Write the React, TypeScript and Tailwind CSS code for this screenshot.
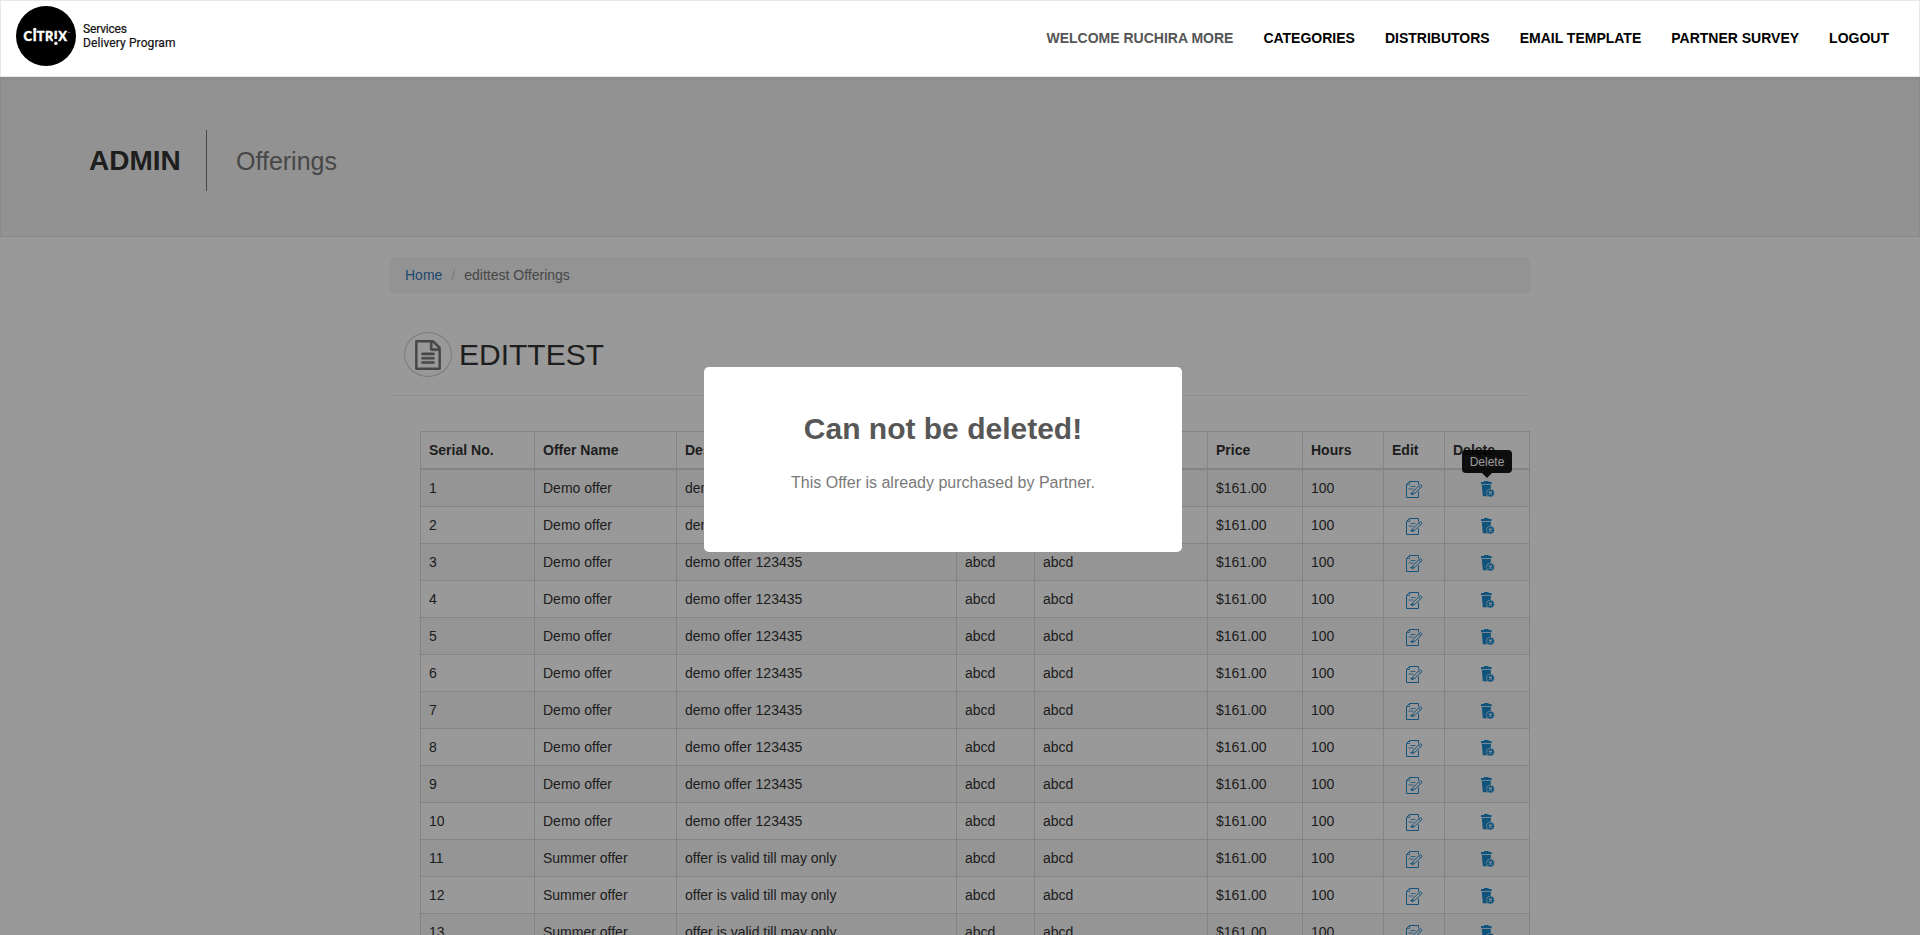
import React from 'react';

const navItems = ['CATEGORIES', 'DISTRIBUTORS', 'EMAIL TEMPLATE', 'PARTNER SURVEY', 'LOGOUT'];

const headers = ['Serial No.', 'Offer Name', 'Description', '', '', 'Price', 'Hours', 'Edit', 'Delete'];

const rows = Array.from({ length: 13 }, (_, i) => ({
  serial: i + 1,
  name: i < 10 ? 'Demo offer' : 'Summer offer',
  description: i < 10 ? 'demo offer 123435' : 'offer is valid till may only',
}));

function Logo() {
  return (
    <svg className="h-[60px] w-[180px]" viewBox="0 0 180 60">
      <circle cx="30" cy="30" r="30" fill="#000" />
      <g fill="#fff">
        <text
          y="35"
          x="7.4 16.8 20.8 28.9 37.8 42.2"
          fontFamily="Lato, sans-serif"
          fontWeight="900"
          fontSize="12.8"
          stroke="#fff"
          strokeWidth="0.4"
        >
          CITRIX
        </text>
        <circle cx="18.8" cy="23.4" r="1.7" />
        <rect x="37" y="33" width="5" height="2.4" fill="#000" />
        <circle cx="39.9" cy="37.4" r="1.7" />
        <circle cx="53" cy="26.5" r="0.5" />
      </g>
      <g fill="#111" fontFamily="Roboto, sans-serif" fontWeight="400" fontSize="12" stroke="#111" strokeWidth="0.2">
        <text x="67" y="26.5" textLength="44" lengthAdjust="spacing">Services</text>
        <text x="67" y="40.7" textLength="92.5" lengthAdjust="spacing">Delivery Program</text>
      </g>
    </svg>
  );
}

function FileIcon() {
  return (
    <svg className="h-[30px] w-[26px] text-[#777]" viewBox="0 0 1536 1792" fill="currentColor" stroke="currentColor" strokeWidth="30">
      <path d="M1468 380q28 28 48 76t20 88v1152q0 40-28 68t-68 28h-1344q-40 0-68-28t-28-68v-1600q0-40 28-68t68-28h896q40 0 88 20t76 48zm-444-244v376h376q-10-29-22-41l-313-313q-12-12-41-22zm384 1528v-1024h-416q-40 0-68-28t-28-68v-416h-768v1536h1280zm-1024-864q0-14 9-23t23-9h704q14 0 23 9t9 23v64q0 14-9 23t-23 9h-704q-14 0-23-9t-9-23v-64zm736 224q14 0 23 9t9 23v64q0 14-9 23t-23 9h-704q-14 0-23-9t-9-23v-64q0-14 9-23t23-9h704zm0 256q14 0 23 9t9 23v64q0 14-9 23t-23 9h-704q-14 0-23-9t-9-23v-64q0-14 9-23t23-9h704z" />
    </svg>
  );
}

function EditIcon() {
  return (
    <svg className="h-[18px] w-[17px] text-[#238bd0]" viewBox="0 0 17 18" fill="none" stroke="currentColor" strokeWidth="1">
      <path d="M12.5 3.5V.5H3.5L.5 3.5V16.5H12.5V10.5" />
      <path d="M3.5 .5V3.5H.5" strokeWidth="0.8" />
      <path d="M4.5 5.5H9.5M2.5 8H7.5M4 12.5H7" strokeWidth="0.8" />
      <path d="M14.3 3.5L16.2 5.3L8.4 12.7L5.7 13.6L6.6 10.9Z" />
      <path d="M12.6 5L14.6 6.9M6.6 10.9L8.4 12.7" strokeWidth="0.8" />
    </svg>
  );
}

function TrashIcon() {
  return (
    <svg className="h-[17px] w-[14px] text-[#1c8ad0]" viewBox="0 0 14 17" fill="currentColor">
      <path d="M3 1V0H7.6V1H10.6V3.2H0V1Z" />
      <path d="M.8 4H9.9L9.3 15.3H1.8Z" />
      <circle cx="9.4" cy="12.1" r="4" stroke="#f9f9f9" strokeWidth="0.6" />
      <path d="M8 10.7L10.8 13.5M10.8 10.7L8 13.5" stroke="#f9f9f9" strokeWidth="1.1" />
    </svg>
  );
}

function Tooltip() {
  return (
    <div className="absolute -top-[20px] left-[17px] h-[27px] w-[50px] opacity-90">
      <div className="flex h-[23px] items-center justify-center rounded bg-black text-[12px] text-white">Delete</div>
      <svg className="mx-auto h-[5px] w-[10px]" viewBox="0 0 10 5">
        <path d="M0 0H10L5 5Z" fill="#000" />
      </svg>
    </div>
  );
}

export default function App() {
  return (
    <div className="relative flex h-[935px] w-full flex-col overflow-hidden bg-white font-['Liberation_Sans',Arial,sans-serif] text-[14px] leading-[20px] text-[#333]">
      <header className="relative z-20 flex h-[77px] shrink-0 items-start justify-between border border-[#e7e7e7] bg-white pt-[5px] pr-[30px] pl-[15px] shadow-[0_1px_6px_rgba(0,0,0,0.06)]">
        <Logo />
        <nav className="flex gap-[30px] pt-[22px] font-bold text-black">
          <span className="text-[#555]">WELCOME RUCHIRA MORE</span>
          {navItems.map((item) => (
            <a key={item}>{item}</a>
          ))}
        </nav>
      </header>

      <section className="flex h-[160px] shrink-0 items-start border border-t-0 border-[#e7e7e7] bg-[#f4f4f4] pt-[53px] pl-[88px]">
        <h1 className="w-[117px] pt-[11px] text-[28px] leading-[40px] font-bold">ADMIN</h1>
        <div className="h-[61px] border-l border-[#777] pt-[11px] pl-[29px] text-[25px] leading-[40px] text-[#777]">
          Offerings
        </div>
      </section>

      <main className="mx-auto w-[1140px] shrink-0 pt-[20px]">
        <div className="flex h-[36px] items-center rounded bg-[#f5f5f5] px-[15px]">
          <a className="text-[#337ab7]">Home</a>
          <span className="px-[9px] text-[#ccc]">/</span>
          <span className="text-[#777]">edittest Offerings</span>
        </div>

        <div className="flex h-[103px] items-start border-b border-[#eee] pt-[39px] pl-[14px]">
          <div className="flex h-[45px] w-[48px] items-center justify-center rounded-[50%] border border-[#ccc]">
            <FileIcon />
          </div>
          <h2 className="pt-[3px] pl-[7px] text-[30px] leading-[40px]">EDITTEST</h2>
        </div>

        <table className="mt-[35px] ml-[30px] w-[1110px] table-fixed border-separate border-spacing-0 border-t border-l border-[#ddd]">
          <colgroup>
            <col className="w-[114px]" />
            <col className="w-[142px]" />
            <col className="w-[280px]" />
            <col className="w-[78px]" />
            <col className="w-[173px]" />
            <col className="w-[95px]" />
            <col className="w-[81px]" />
            <col className="w-[61px]" />
            <col className="w-[85px]" />
          </colgroup>
          <thead>
            <tr className="h-[38px]">
              {headers.map((h, i) => (
                <th key={i} className="border-r border-b-2 border-[#ddd] px-[8px] text-left font-bold">
                  {h}
                </th>
              ))}
            </tr>
          </thead>
          <tbody className="[&_td]:border-r [&_td]:border-b [&_td]:border-[#ddd] [&_td]:p-0 [&_td]:px-[8px]">
            {rows.map((r, i) => (
              <tr key={r.serial} className="h-[37px] odd:bg-[#f9f9f9]">
                <td>{r.serial}</td>
                <td>{r.name}</td>
                <td>{r.description}</td>
                <td>abcd</td>
                <td>abcd</td>
                <td>$161.00</td>
                <td>100</td>
                <td>
                  <div className="flex justify-center pt-[4px] pl-[1px]">
                    <EditIcon />
                  </div>
                </td>
                <td className="relative">
                  <div className="flex justify-center pt-[3px] pl-[2px]">
                    <TrashIcon />
                  </div>
                  {i === 0 && <Tooltip />}
                </td>
              </tr>
            ))}
          </tbody>
        </table>
      </main>

      <div className="absolute inset-0 z-10 bg-black/40" />

      <div
        role="dialog"
        className="absolute top-[367px] left-[704px] z-30 h-[185px] w-[478px] rounded-[5px] bg-white pt-[42px] text-center"
      >
        <h2 className="text-[30px] leading-[40px] font-semibold text-[#575757]">Can not be deleted!</h2>
        <p className="pt-[24px] text-[16px] leading-[20px] text-[#797979]">This Offer is already purchased by Partner.</p>
      </div>
    </div>
  );
}
